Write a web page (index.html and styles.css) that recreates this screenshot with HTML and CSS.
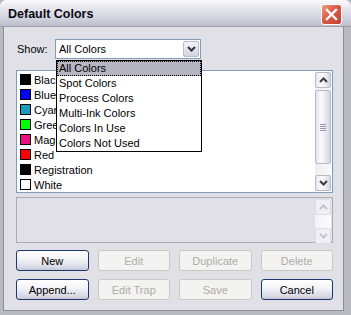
FILE: index.html
```html
<!DOCTYPE html>
<html>
<head>
<meta charset="utf-8">
<link rel="stylesheet" href="styles.css">
</head>
<body>
<div class="window">
  <div class="titlebar">
    <span class="title">Default Colors</span>
    <div class="close">
      <svg width="13" height="13" viewBox="0 0 13 13"><path d="M2 2 L11 11 M11 2 L2 11" stroke="#fff" stroke-width="2.4" stroke-linecap="square"/></svg>
    </div>
  </div>
  <div class="frame">
    <div class="content">
      <div class="show-row">
        <span class="show-label">Show:</span>
        <div class="select">
          <span class="select-text">All Colors</span>
          <span class="select-btn">
            <svg width="9" height="6" viewBox="0 0 9 6"><path d="M1 1 L4.5 4.5 L8 1" fill="none" stroke="#333" stroke-width="2"/></svg>
          </span>
        </div>
      </div>
      <div class="listbox">
        <ul class="items">
          <li><span class="sw" style="background:#000"></span>Black</li>
          <li><span class="sw" style="background:#0000ff"></span>Blue</li>
          <li><span class="sw" style="background:#1a9bbf"></span>Cyan</li>
          <li><span class="sw" style="background:#00ff00"></span>Green</li>
          <li><span class="sw" style="background:#e8117f"></span>Magenta</li>
          <li><span class="sw" style="background:#ff0000"></span>Red</li>
          <li><span class="sw" style="background:#000"></span>Registration</li>
          <li><span class="sw" style="background:#fff"></span>White</li>
        </ul>
        <div class="scrollbar">
          <div class="sb-btn">
            <svg width="9" height="6" viewBox="0 0 9 6"><path d="M1 5 L4.5 1.5 L8 5" fill="none" stroke="#3b3b48" stroke-width="2"/></svg>
          </div>
          <div class="sb-track">
            <div class="sb-thumb"><span class="grip"></span></div>
          </div>
          <div class="sb-btn">
            <svg width="9" height="6" viewBox="0 0 9 6"><path d="M1 1 L4.5 4.5 L8 1" fill="none" stroke="#3b3b48" stroke-width="2"/></svg>
          </div>
        </div>
      </div>
      <div class="infobox">
        <div class="scrollbar disabled">
          <div class="sb-btn">
            <svg width="9" height="6" viewBox="0 0 9 6"><path d="M1 5 L4.5 1.5 L8 5" fill="none" stroke="#c4c4cc" stroke-width="2"/></svg>
          </div>
          <div class="sb-track"></div>
          <div class="sb-btn">
            <svg width="9" height="6" viewBox="0 0 9 6"><path d="M1 1 L4.5 4.5 L8 1" fill="none" stroke="#c4c4cc" stroke-width="2"/></svg>
          </div>
        </div>
      </div>
      <div class="buttons">
        <div class="btn">New</div>
        <div class="btn off">Edit</div>
        <div class="btn off">Duplicate</div>
        <div class="btn off">Delete</div>
        <div class="btn">Append...</div>
        <div class="btn off">Edit Trap</div>
        <div class="btn off">Save</div>
        <div class="btn">Cancel</div>
      </div>
    </div>
  </div>
  <ul class="dropdown">
    <li class="sel">All Colors</li>
    <li>Spot Colors</li>
    <li>Process Colors</li>
    <li>Multi-Ink Colors</li>
    <li>Colors In Use</li>
    <li>Colors Not Used</li>
  </ul>
</div>
</body>
</html>
```

FILE: styles.css
```css
* { box-sizing: border-box; }
html, body { margin: 0; padding: 0; }
body {
  width: 351px;
  height: 315px;
  overflow: hidden;
  font-family: "Liberation Sans", Arial, sans-serif;
  font-size: 11px;
  color: #000;
  background: #b4b4bc;
}
.window {
  position: relative;
  width: 351px;
  height: 315px;
  display: flex;
  flex-direction: column;
}
.titlebar {
  height: 27px;
  flex: none;
  display: flex;
  align-items: center;
  justify-content: space-between;
  padding: 0 9px 0 8px;
  background: linear-gradient(#fbfbfd 0%, #e4e4ec 35%, #cfd0dd 75%, #bcbccb 100%);
  border-top-left-radius: 6px;
  border-top-right-radius: 6px;
  border-bottom: 1px solid #9d9dab;
}
.title {
  font-weight: bold;
  font-size: 12.5px;
  color: #0a0a14;
  padding-top: 2px;
}
.close {
  width: 21px;
  height: 21px;
  border: 1px solid #fff;
  border-radius: 3px;
  background: linear-gradient(135deg, #f09a88 0%, #dc5a48 45%, #c0402e 100%);
  display: flex;
  align-items: center;
  justify-content: center;
  margin-top: 2px;
}
.frame {
  flex: 1;
  display: flex;
  padding: 0 7px 4px 3px;
  background: #b9b9c2;
}
.content {
  flex: 1;
  background: #e1e0e6;
  border-left: 1px solid #8d8d98;
  border-right: 1px solid #8d8d98;
  border-bottom: 1px solid #8d8d98;
  padding: 12px 10px 10px 12px;
  display: flex;
  flex-direction: column;
}
.show-row {
  display: flex;
  align-items: center;
  height: 20px;
}
.show-label {
  width: 39px;
  padding-left: 1px;
}
.select {
  width: 146px;
  height: 20px;
  background: #fff;
  border: 1px solid #7f9db9;
  display: flex;
  align-items: center;
  justify-content: space-between;
  padding: 0 1px 0 3px;
}
.select-btn {
  width: 16px;
  height: 16px;
  border: 1px solid #b8bccc;
  border-radius: 2px;
  background: linear-gradient(#f4f4f8, #d2d4e2);
  display: flex;
  align-items: center;
  justify-content: center;
}
.listbox {
  margin-top: 11px;
  height: 123px;
  background: #fff;
  border: 1px solid #7f9db9;
  display: flex;
  justify-content: space-between;
}
.items {
  list-style: none;
  margin: 1px 0 0 0;
  padding: 0;
}
.items li {
  height: 15px;
  display: flex;
  align-items: center;
  padding-left: 3px;
}
.sw {
  width: 11px;
  height: 11px;
  border: 1px solid #000;
  margin-right: 3px;
}
.scrollbar {
  width: 16px;
  margin: 1px 1px 1px 0;
  display: flex;
  flex-direction: column;
  background: linear-gradient(90deg, #eeeef3, #fafafd);
}
.sb-btn {
  height: 16px;
  flex: none;
  border: 1px solid #b8bac8;
  border-radius: 2px;
  background: linear-gradient(90deg, #e6e6ee, #fdfdff 40%, #d6d7e3);
  display: flex;
  align-items: center;
  justify-content: center;
}
.sb-track {
  flex: 1;
  padding: 2px 0 11px 0;
  display: flex;
}
.sb-thumb {
  flex: 1;
  border: 1px solid #b6b8c8;
  border-radius: 2px;
  background: linear-gradient(90deg, #e4e4ec, #fbfbfe 40%, #d3d4e1);
  display: flex;
  align-items: center;
  justify-content: center;
}
.grip {
  width: 6px;
  height: 7px;
  background: repeating-linear-gradient(#9a9aaa 0 1px, transparent 1px 2px);
}
.infobox {
  margin-top: 4px;
  height: 46px;
  border: 1px solid #acabb4;
  background: #e1e0e6;
  display: flex;
  justify-content: flex-end;
}
.scrollbar.disabled {
  background: linear-gradient(90deg, #f3f3f7, #fcfcfe);
}
.scrollbar.disabled .sb-btn {
  border-color: #dcdce4;
  background: #f0f0f4;
}
.buttons {
  margin-top: 7px;
  display: grid;
  grid-template-columns: repeat(4, 1fr);
  column-gap: 9px;
  row-gap: 8px;
}
.btn {
  height: 21px;
  border: 1px solid #1c3a6e;
  border-radius: 3px;
  background: linear-gradient(#ffffff 0%, #f4f4f8 40%, #d9d9e6 85%, #c4c4d4 100%);
  display: flex;
  align-items: center;
  justify-content: center;
}
.btn.off {
  border-color: #cac8c2;
  background: #f3f3f1;
  color: #aeaca6;
}
.dropdown {
  position: absolute;
  left: 56px;
  top: 60px;
  width: 146px;
  height: 92px;
  margin: 0;
  padding: 0;
  list-style: none;
  background: #fff;
  border: 1px solid #000;
}
.dropdown li {
  height: 15px;
  line-height: 15px;
  padding-left: 2px;
}
.dropdown li.sel {
  background: #b6b6c2;
  outline: 1px dotted #000;
  outline-offset: -1px;
}
```
